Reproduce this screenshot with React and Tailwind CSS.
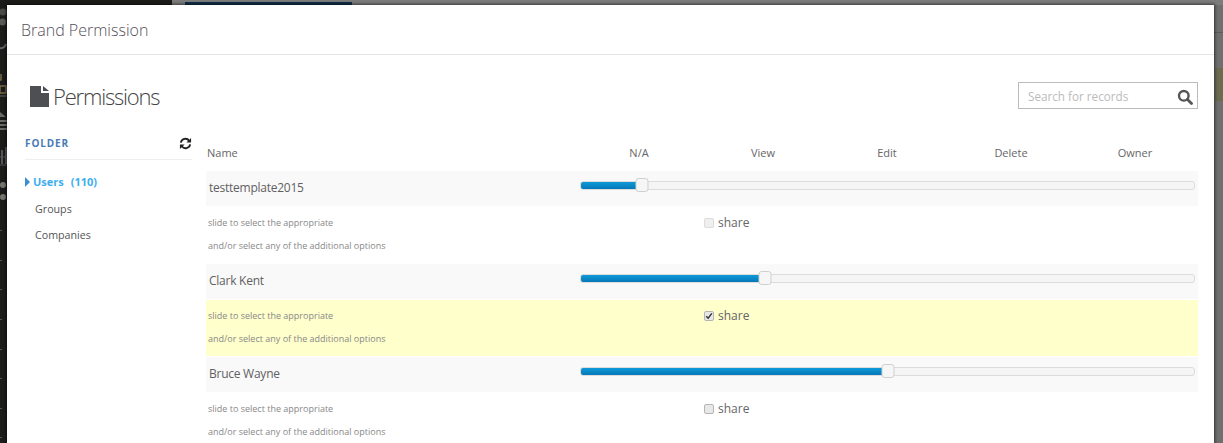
import React from 'react';

const rows = [
  { name: 'testtemplate2015', left: '10%', fill: 'w-[56px]', checked: false, disabled: true },
  { name: 'Clark Kent', left: '30%', fill: 'w-[179px]', checked: true, highlight: true },
  { name: 'Bruce Wayne', left: '50.1%', fill: 'w-[302px]', checked: false },
];

const Slider = ({ fill, left }) => (
  <div className="relative mt-[10px] h-[9px] w-[615px] rounded-[3px] border border-[#dcdcdc] bg-[#f5f5f5]">
    <div className={`h-[7px] rounded-l-[2px] bg-gradient-to-b from-[#0f9ad8] to-[#0678b8] ${fill}`}></div>
    <div className="absolute top-[-4px] h-[14px] w-[13px] -translate-x-1/2 rounded-[3px] border border-[#cfcfcf] bg-[#f6f6f6]" style={{ left }}></div>
  </div>
);

const PermRow = ({ name, fill, left, checked, disabled, highlight }) => (
  <div className="mb-[1px]">
    <div className="flex h-[35px] bg-[#f9f9f9] pl-[3px]">
      <div className="w-[371px] pt-[7px] text-[12px] leading-[20px] tracking-[-0.25px] text-[#5f5f5f]">{name}</div>
      <Slider fill={fill} left={left} />
    </div>
    <div className={`mt-[1px] flex h-[56px] ${highlight ? 'bg-[#ffffcc]' : 'bg-white'}`}>
      <div className="w-[498px] pl-[2px] pt-[4px] text-[9px] leading-[23px] text-[#888]">
        <div>slide to select the appropriate</div>
        <div>and/or select any of the additional options</div>
      </div>
      <label className="flex h-[32px] items-center gap-[4px] text-[12px] text-[#666]">
        <span className={`flex h-[10px] w-[10px] items-center justify-center rounded-[2px] border ${disabled ? 'border-[#dcdcdc] bg-[#efefef]' : 'border-[#b5b5b5] bg-[#e8e8e8]'}`}>
          {checked && (
            <svg viewBox="0 0 10 10" className="h-[8px] w-[8px]"><path d="M1.5 5.2 4 7.8 8.5 1.8" fill="none" stroke="#333" strokeWidth="1.8" /></svg>
          )}
        </span>
        share
      </label>
    </div>
  </div>
);

const Backdrop = () => (
  <div className="flex h-[443px] w-[1223px]">
    <div className="w-[172px] bg-[#1c1c1a]">
      <svg viewBox="0 0 7 443" className="h-[443px] w-[7px]">
        <circle cx="3" cy="12" r="3.5" fill="#4a4a48" />
        <circle cx="2.5" cy="22" r="3.5" fill="#5a5a58" />
        <path d="M0 48a5 5 0 0 0 6-4" fill="none" stroke="#666" strokeWidth="2" />
        <path d="M0 86h6v7H0zM0 80h1v-6" fill="none" stroke="#7a6a45" strokeWidth="1.5" />
        <path d="M0 96h7" stroke="#666" strokeWidth="1" />
        <path d="M0 112l6 5H0zM0 120h7v2H0zM0 124h7v2H0zM0 128h7v2H0z" fill="#6a6a66" />
        <path d="M0 157h7M0 165h7" stroke="#555" strokeWidth="1" />
        <path d="M1 150h2v14H1zM5 147h2v17H5z" fill="#555" />
        <circle cx="3" cy="185" r="3" fill="#77776f" />
        <circle cx="3" cy="197" r="3" fill="#77776f" />
        <path d="M0 230.500h2M0 260.500h2M0 289.500h2M0 319.500h2M0 349.500h2M0 378.500h2M0 408.500h2M0 437.500h2" stroke="#55554f" strokeWidth="1" />
      </svg>
    </div>
    <div className="relative flex-1 bg-[#6f6f6f]">
      <div className="h-[5px] bg-[#7c7c7c]"></div>
      <div className="absolute left-[13px] top-[2px] h-[3px] w-[167px] bg-[#12304a]"></div>
      <div className="absolute right-0 top-[32px] h-[1px] w-[9px] bg-[#5c5c5c]"></div>
      <div className="absolute right-0 top-[68px] h-[33px] w-[8px] bg-[#6b6b50]"></div>
    </div>
  </div>
);

export default function App() {
  return (
    <div className="relative h-[443px] w-[1223px] overflow-hidden font-['Open_Sans',sans-serif]">
      <Backdrop />
      <div className="absolute left-[7px] top-[5px] h-[438px] w-[1207px] bg-white shadow-[0_0_3px_1px_rgba(0,0,0,0.55)]">
        <div className="flex h-[50px] items-center border-b border-[#e5e5e5] pl-[14px] text-[16px] font-light text-[#55505a]">Brand Permission</div>
        <div className="flex items-start justify-between pl-[23px] pr-[16px] pt-[27px]">
          <div className="flex h-[29px] items-center gap-[4px] text-[22px] font-light tracking-[-1.2px] text-[#444]">
            <svg viewBox="0 0 19 21" className="h-[21px] w-[19px]"><path d="M0 0h11v7h8v14H0z M13 0l6 5h-6z" fill="#4d4f53" /></svg>
            Permissions
          </div>
          <div className="flex h-[27px] w-[180px] items-center justify-between border border-[#bbb] pl-[9px] pr-[4px] pt-[2px] text-[11.7px] text-[#bbb]">
            Search for records
            <svg viewBox="0 0 16 16" className="h-[16px] w-[16px]"><circle cx="6.8" cy="6.8" r="4.8" fill="none" stroke="#555" strokeWidth="2.4" /><path d="M10.5 10.500 14.500 14.500" stroke="#555" strokeWidth="2.8" strokeLinecap="round" /></svg>
          </div>
        </div>
        <div className="flex pl-[18px] pr-[16px] pt-[15px]">
          <div className="w-[167px]">
            <div className="flex h-[34px] items-center justify-between border-b border-[#eee] pt-[1px]">
              <span className="text-[10px] font-bold tracking-[0.9px] text-[#4a7ab5]">FOLDER</span>
              <svg viewBox="0 0 14 14" className="h-[13px] w-[13px]"><path d="M2 6a5 5 0 0 1 9-2M12 8a5 5 0 0 1-9 2" fill="none" stroke="#222" strokeWidth="2" /><path d="M13 1v5H8zM1 13V8h5z" fill="#222" /></svg>
            </div>
            <div className="flex items-center pt-[14px] text-[11px] font-bold leading-[16px] text-[#3eaef0]">
              <span className="mr-[3px] h-0 w-0 border-y-[5px] border-l-[5px] border-y-transparent border-l-[#3a8fd0]"></span>
              Users<span className="ml-[7px]">(110)</span>
            </div>
            <div className="pl-[10px] pt-[11px] text-[10.7px] leading-[16px] text-[#555]">Groups</div>
            <div className="pl-[10px] pt-[10px] text-[10.7px] leading-[16px] text-[#555]">Companies</div>
          </div>
          <div className="ml-[14px] w-[992px]">
            <div className="flex h-[45px] items-center pt-[10px] text-[11px] text-[#666]">
              <div className="w-[371px] pl-[1px]">Name</div>
              <div className="grid w-[620px] grid-cols-5 text-center">
                <span>N/A</span><span>View</span><span>Edit</span><span>Delete</span><span>Owner</span>
              </div>
            </div>
            {rows.map((r) => (
              <PermRow key={r.name} {...r} />
            ))}
          </div>
        </div>
      </div>
    </div>
  );
}
